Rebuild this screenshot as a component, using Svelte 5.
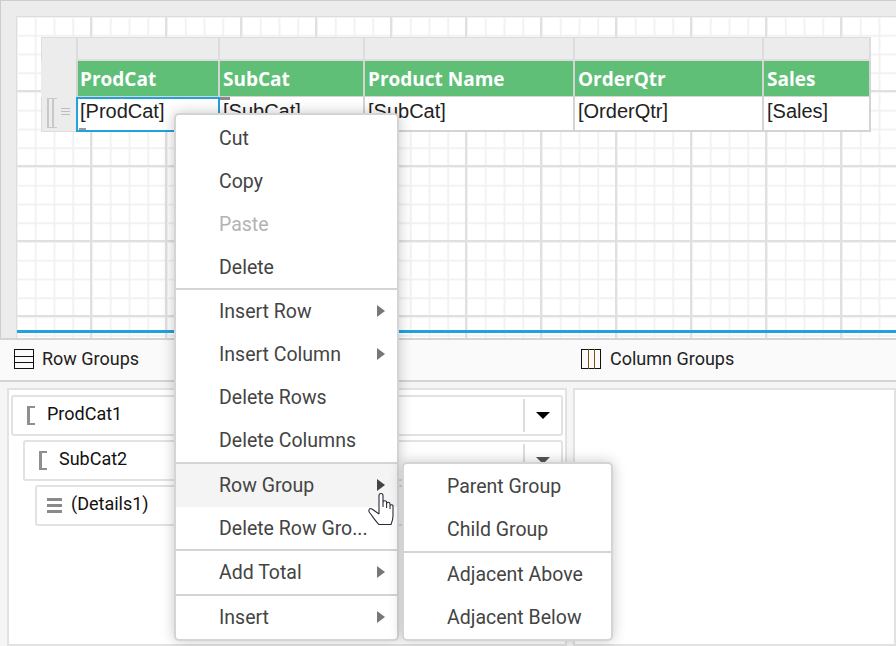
<script>
const columns = [
    { head: 'ProdCat', cell: '[ProdCat]', width: 142 },
    { head: 'SubCat', cell: '[SubCat]', width: 145 },
    { head: 'Product Name', cell: '[SubCat]', width: 210 },
    { head: 'OrderQtr', cell: '[OrderQtr]', width: 189 },
    { head: 'Sales', cell: '[Sales]', width: 109 }
];

const menu = [
    [{ label: 'Cut' }, { label: 'Copy' }, { label: 'Paste', off: true }, { label: 'Delete' }],
    [{ label: 'Insert Row', more: true }, { label: 'Insert Column', more: true }, { label: 'Delete Rows' }, { label: 'Delete Columns' }],
    [{ label: 'Row Group', more: true, hover: true }, { label: 'Delete Row Gro...' }],
    [{ label: 'Add Total', more: true }],
    [{ label: 'Insert', more: true }]
];

const submenu = [
    [{ label: 'Parent Group' }, { label: 'Child Group' }],
    [{ label: 'Adjacent Above' }, { label: 'Adjacent Below' }]
];

const groups = [
    { label: 'ProdCat1', icon: 'bracket', indent: 0 },
    { label: 'SubCat2', icon: 'bracket', indent: 12, dim: true },
    { label: '(Details1)', icon: 'lines', indent: 24 }
];
</script>

<div class="page">
    <div class="designer">
        <div class="ruler"></div>
        <div class="canvas">
            <div class="report">
                <div class="row top">
                    <div class="corner"></div>
                    {#each columns as col}
                        <div class="colhead" style="width: {col.width}px"></div>
                    {/each}
                </div>
                <div class="row heads">
                    <div class="corner"></div>
                    {#each columns as col}
                        <div class="head" style="width: {col.width}px">{col.head}</div>
                    {/each}
                </div>
                <div class="row cells">
                    <div class="corner handle">
                        <span class="brk one"></span>
                        <span class="brk two"></span>
                        <span class="three"></span>
                    </div>
                    {#each columns as col, i}
                        <div class="cell" class:selected={i === 0} style="width: {col.width}px">{col.cell}</div>
                    {/each}
                </div>
            </div>
            <div class="blue"></div>
        </div>
    </div>

    <div class="tabs">
        <div class="tab">
            <svg width="20" height="20" viewBox="0 0 20 20">
                <rect x="0.5" y="0.5" width="19" height="19" fill="none" stroke="#111" />
                <path d="M0 7.5h20M0 13.5h20" stroke="#111" />
            </svg>
            Row Groups
        </div>
        <div class="tab second">
            <svg width="20" height="20" viewBox="0 0 20 20">
                <rect x="0.5" y="0.5" width="19" height="19" fill="none" stroke="#111" />
                <path d="M7.5 0v20M13.5 0v20" stroke="#7a5312" />
            </svg>
            Column Groups
        </div>
    </div>

    <div class="panels">
        <div class="panel left">
            {#each groups as g}
                <div class="group" style="margin-left: {g.indent}px">
                    {#if g.icon === 'bracket'}
                        <span class="gbracket"></span>
                    {:else}
                        <span class="glines"></span>
                    {/if}
                    <span class="glabel">{g.label}</span>
                    <span class="arrowbox"><span class="down" class:dim={g.dim}></span></span>
                </div>
            {/each}
        </div>
        <div class="panel right"></div>
    </div>

    <div class="menu main">
        {#each menu as section}
            <div class="section">
                {#each section as item}
                    <div class="item" class:off={item.off} class:hover={item.hover}>
                        {item.label}
                        {#if item.more}<span class="more"></span>{/if}
                    </div>
                {/each}
            </div>
        {/each}
    </div>

    <div class="menu sub">
        {#each submenu as section}
            <div class="section">
                {#each section as item}
                    <div class="item">{item.label}</div>
                {/each}
            </div>
        {/each}
    </div>

    <svg class="cursor" width="26" height="34" viewBox="0 0 26 34">
        <path d="M11 3.5h4V10h3.6v2H22v2h3v10l-2 8.500H11L1.500 20 4 17l7 5z" fill="#fff" />
        <path d="M11 22V3.5a2 2 0 0 1 4 0V15M15 10.5a1.800 1.800 0 0 1 3.600 0V16M18.600 12a1.700 1.700 0 0 1 3.400 0V17M22 14a1.500 1.500 0 0 1 3 0.500V24c0 3-1 6-2 8.500H11C8 30 5 25 1.500 20.500C0 18.500 1.500 15.500 4 17l7 5" fill="none" stroke="#2b2b3a" stroke-width="1.100" stroke-linejoin="round" />
    </svg>
</div>

<style>
:global(body) { margin: 0; background: #fff; }

.page { position: relative; width: 896px; height: 646px; overflow: hidden; font-family: Roboto, sans-serif; }

.designer { display: flex; height: 338px; box-sizing: border-box; border-top: 1px solid #ccc; border-left: 1px solid #ccc; background: #ececec; padding-top: 15px; }
.ruler { width: 15px; flex: none; }

.canvas { flex: 1; display: flex; flex-direction: column; box-sizing: border-box; border-top: 1px solid #ddd; border-left: 1px solid #ddd;
    background-color: #fff;
    background-image:
        linear-gradient(#e0e0e0 2px, transparent 2px),
        linear-gradient(90deg, #e0e0e0 2px, transparent 2px),
        linear-gradient(#f2f2f2 2px, transparent 2px),
        linear-gradient(90deg, #f2f2f2 2px, transparent 2px);
    background-size: 75px 75px, 75px 75px, 18.75px 18.75px, 18.75px 18.75px;
    background-position: 0 -2px, -2px 0, 0 -1px, -1px 0;
}

.report { margin: 20px 0 0 24px; height: 293px; }
.row { display: flex; }
.corner { width: 35px; flex: none; box-sizing: border-box; background: #ececec; }

.top { height: 24px; }
.top .corner { border: 1px solid #ddd; border-right: 0; border-bottom: 0; }
.colhead { box-sizing: border-box; background: #ececec; border-top: 1px solid #ddd; border-left: 2px solid #ddd; border-bottom: 2px solid #ddd; flex: none; }
.colhead:last-child { border-right: 2px solid #ddd; }

.heads { height: 36px; }
.head { box-sizing: border-box; flex: none; background: #5fbf77; color: #fff; border-left: 2px solid #d4d4d4; border-bottom: 1px solid #d4d4d4; padding-left: 3px; font: bold 19px/36px "Open Sans", sans-serif; }
.corner + .head { padding-left: 2px; }
.head:last-child { border-right: 2px solid #d4d4d4; }

.cells { height: 35px; }
.handle { position: relative; border-left: 1px solid #ddd; border-bottom: 1px solid #ddd; }
.brk { position: absolute; top: 1px; width: 5px; height: 30px; box-sizing: border-box; border: 2px solid #c8c8c8; border-right: 0; border-top-width: 1px; border-bottom-width: 1px; }
.one { left: 5px; }
.two { left: 10px; }
.three { position: absolute; left: 19px; top: 11px; width: 9px; height: 9px; background: repeating-linear-gradient(#bdbdbd 0 1px, transparent 1px 3px); }

.cell { position: relative; box-sizing: border-box; flex: none; background: #fff; color: #222; border-left: 2px solid #d4d4d4; border-bottom: 2px solid #d4d4d4; padding-left: 3px; font: 20px/29px "Liberation Sans", sans-serif; }
.cell:last-child { border-right: 2px solid #d4d4d4; }
.cell.selected { min-width: 144px; margin-right: -2px; padding-left: 2px; border: 2px solid #1fa3dc; z-index: 1; line-height: 25px; }
.cell.selected::before { content: ''; position: absolute; left: 1px; bottom: 0; width: 7px; height: 2px; background: #999; }
.cell.selected::after { content: ''; position: absolute; left: calc(100% + 2px); top: -2px; width: 10px; height: 3px; background: #8a8a8a; }

.blue { height: 3px; background: #1fa3dc; }

.tabs { display: flex; height: 44px; box-sizing: border-box; padding-bottom: 4px; border-top: 2px solid #d4d4d4; border-bottom: 2px solid #d4d4d4; background: #fafafa; align-items: center; font-size: 18px; color: #222; }
.tab { display: flex; align-items: center; gap: 8px; padding-left: 14px; width: 567px; box-sizing: border-box; }
.tab.second { padding-left: 14px; width: auto; gap: 9px; }
.tabs svg { flex: none; margin-top: 2px; }

.panels { display: flex; gap: 6px; padding: 6px 0 0 7px; height: 264px; box-sizing: border-box; background: #f5f5f5; }
.panel { background: #fff; border: 2px solid #e2e2e2; box-sizing: border-box; }
.left { width: 560px; padding: 5px 2px 0 2px; display: flex; flex-direction: column; gap: 4px; }
.right { flex: 1; }

.group { display: flex; align-items: center; height: 41px; box-sizing: border-box; border: 2px solid #e2e2e2; border-radius: 3px; font-size: 18px; color: #111; }
.gbracket { width: 8px; height: 19px; margin-left: 14px; margin-right: 12px; box-sizing: border-box; border: 3px solid #8f8f8f; border-right: 0; border-top-width: 2px; border-bottom-width: 2px; }
.glines { width: 15px; height: 15px; margin-left: 10px; margin-right: 9px; background: repeating-linear-gradient(#8a8a8a 0 3px, transparent 3px 6px); }
.glabel { flex: 1; padding-bottom: 5px; }
.arrowbox { width: 38px; height: 33px; box-sizing: border-box; border-left: 2px solid #ddd; display: flex; align-items: center; justify-content: center; }
.down { width: 0; height: 0; border: 7px solid transparent; border-top: 7px solid #000; border-bottom: 0; }
.down.dim { border-top-color: #555; }

.menu { position: absolute; box-sizing: border-box; background: #fff; border: 2px solid #d4d4d4; border-radius: 5px; box-shadow: 0 0 14px rgba(0, 0, 0, 0.22); font-size: 19.5px; color: #444; z-index: 5; }
.main { left: 174px; top: 113px; width: 225px; height: 528px; padding-top: 2px; }
.sub { left: 402px; top: 462px; width: 211px; height: 179px; padding-top: 1px; }
.section + .section { border-top: 2px solid #d4d4d4; }
.main .section:nth-child(even) { margin-top: -1px; }
.item { position: relative; height: 43px; line-height: 43px; padding-left: 43px; white-space: nowrap; }
.off { color: #b3b3b3; }
.hover { background: #f4f4f4; }
.more { position: absolute; right: 12px; top: 15px; width: 0; height: 0; border: 6px solid transparent; border-left: 8px solid #777; border-right: 0; }
.hover .more { border-left-color: #444; }

.cursor { position: absolute; left: 368px; top: 492px; z-index: 6; }
</style>
